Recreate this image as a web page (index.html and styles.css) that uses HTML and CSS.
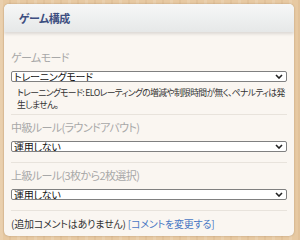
FILE: index.html
```html
<!DOCTYPE html>
<html lang="ja">
<head>
  <meta charset="UTF-8">
  <title>ゲーム構成</title>
  <link rel="stylesheet" href="styles.css">
</head>
<body>

  <div class="panel">
    <div class="panel-head">ゲーム構成</div>

    <div class="panel-body">
      <div class="field first">
        <div class="field-label">ゲームモード</div>
        <div class="select-wrap">
          <select class="field-select">
            <option>トレーニングモード</option>
            <option>レーティングモード</option>
          </select>
          <svg class="chevron" width="8" height="5" viewBox="0 0 8 5"><path d="M1 1l3 3 3-3" fill="none" stroke="#222" stroke-width="1.6"/></svg>
        </div>
        <p class="field-note">トレーニングモード: ELOレーティングの増減や制限時間が無く、ペナルティは発生しません。</p>
      </div>

      <div class="field">
        <div class="field-label">中級ルール(ラウンドアバウト)</div>
        <div class="select-wrap">
          <select class="field-select">
            <option>運用しない</option>
            <option>運用する</option>
          </select>
          <svg class="chevron" width="8" height="5" viewBox="0 0 8 5"><path d="M1 1l3 3 3-3" fill="none" stroke="#222" stroke-width="1.6"/></svg>
        </div>
      </div>

      <div class="field">
        <div class="field-label">上級ルール(3枚から2枚選択)</div>
        <div class="select-wrap">
          <select class="field-select">
            <option>運用しない</option>
            <option>運用する</option>
          </select>
          <svg class="chevron" width="8" height="5" viewBox="0 0 8 5"><path d="M1 1l3 3 3-3" fill="none" stroke="#222" stroke-width="1.6"/></svg>
        </div>
      </div>

      <p class="comment">(追加コメントはありません) <a href="#" class="comment-link">[コメントを変更する]</a></p>
    </div>
  </div>

</body>
</html>
```

FILE: styles.css
```css
body {
  margin: 0;
  width: 300px;
  height: 240px;
  overflow: hidden;
  font-family: "Noto Sans CJK JP", "Noto Sans", sans-serif;
  font-feature-settings: "palt";
  background-color: #e7c9a2;
  background-image:
    repeating-linear-gradient(90deg, rgba(255,255,255,0.12) 0 3px, rgba(0,0,0,0) 3px 9px, rgba(160,110,60,0.08) 9px 11px, rgba(0,0,0,0) 11px 17px);
  padding: 4px;
  box-sizing: border-box;
}

.panel {
  width: 290px;
  height: 232px;
  border-radius: 5px;
  background-color: #faf6f1;
  box-shadow: 0 0 2px rgba(90, 60, 30, 0.35);
  overflow: hidden;
}

.panel-head {
  height: 28px;
  padding-left: 15px;
  display: flex;
  align-items: center;
  background: linear-gradient(#f6f7f7, #e6e8e8);
  box-shadow: 0 2px 3px rgba(0, 0, 0, 0.12);
  font-size: 11px;
  font-weight: bold;
  letter-spacing: -0.4px;
  color: #3d4e80;
  position: relative;
}

.panel-body {
  padding: 0 7px;
}

.field {
  padding: 4px 0 10px;
  border-bottom: 1px solid #e8e3dc;
}

.field.first {
  padding: 17px 0 3px;
}

.field-label {
  font-size: 11px;
  line-height: 16px;
  letter-spacing: -0.6px;
  color: #a8a8a8;
  margin-bottom: 6px;
}

.select-wrap {
  position: relative;
}

.field-select {
  display: block;
  width: 100%;
  height: 11px;
  padding: 0 0 0 2px;
  margin: 0;
  font-family: inherit;
  font-feature-settings: "palt";
  font-size: 10px;
  line-height: 9px;
  letter-spacing: -0.2px;
  color: #111;
  background: #fff;
  border: 1px solid #808080;
  border-radius: 2px;
  box-sizing: border-box;
  appearance: none;
  -webkit-appearance: none;
}

.chevron {
  position: absolute;
  right: 4px;
  top: 3px;
  pointer-events: none;
}

.field-note {
  margin: 5px 0 0;
  padding-left: 6px;
  font-size: 8.8px;
  line-height: 12px;
  letter-spacing: -0.65px;
  color: #333;
}

.comment {
  margin: 6px 0 0;
  font-size: 10px;
  line-height: 14px;
  letter-spacing: -0.2px;
  color: #333;
}

.comment-link {
  color: #4a78c4;
  text-decoration: none;
}
```
